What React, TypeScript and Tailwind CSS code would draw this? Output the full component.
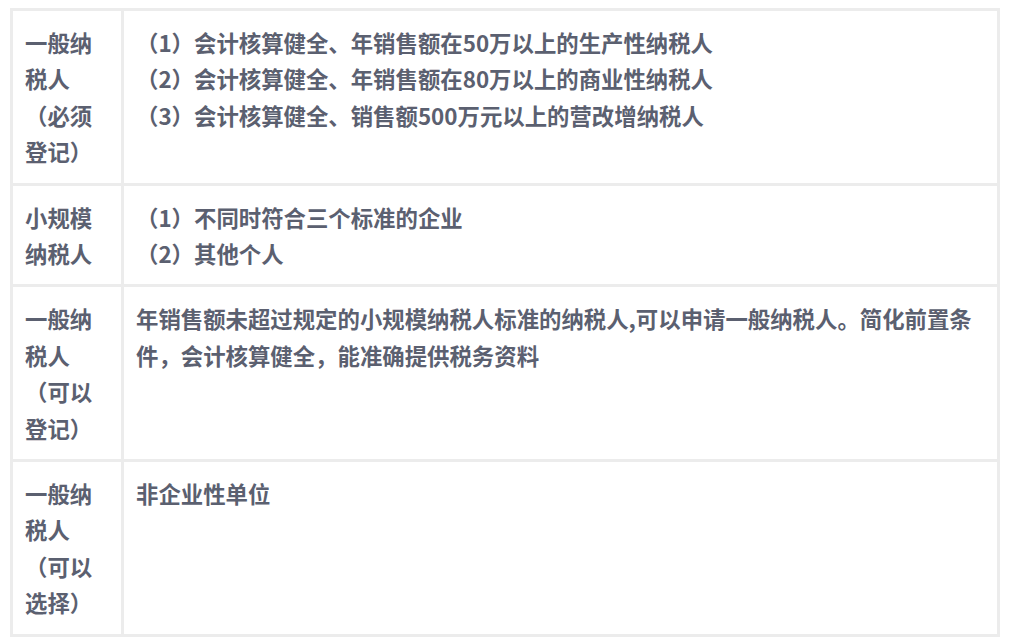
const rows = [
  {
    type: "一般纳税人（必须登记）",
    lines: [
      "（1）会计核算健全、年销售额在50万以上的生产性纳税人",
      "（2）会计核算健全、年销售额在80万以上的商业性纳税人",
      "（3）会计核算健全、销售额500万元以上的营改增纳税人",
    ],
  },
  {
    type: "小规模纳税人",
    lines: ["（1）不同时符合三个标准的企业", "（2）其他个人"],
  },
  {
    type: "一般纳税人（可以登记）",
    lines: ["年销售额未超过规定的小规模纳税人标准的纳税人,可以申请一般纳税人。简化前置条件，会计核算健全，能准确提供税务资料"],
  },
  {
    type: "一般纳税人（可以选择）",
    lines: ["非企业性单位"],
  },
]

export default function App() {
  return (
    <div className="w-[1010px] h-[643px] bg-white pt-[8px] pl-[10px]">
      <div
        className="w-[990px] grid grid-cols-[108px_1fr] gap-[3px] p-[3px] bg-[#ececec] text-[22.4px] leading-[36.4px] font-bold text-[#5b6070]"
        style={{ fontFamily: '"Noto Sans CJK SC", "Noto Sans", sans-serif' }}
      >
        {rows.map((row, i) => (
          <div key={i} className="contents">
            <div className="bg-white px-[12px] py-[13px] break-all">{row.type}</div>
            <div className="bg-white px-[12px] py-[13px]">
              {row.lines.map((line, j) => (
                <div key={j}>{line}</div>
              ))}
            </div>
          </div>
        ))}
      </div>
    </div>
  )
}
